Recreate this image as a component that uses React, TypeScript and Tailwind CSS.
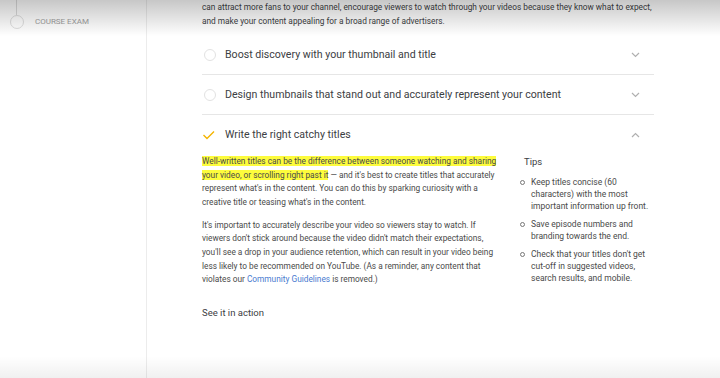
import React from "react";

function Chevron({ up }: { up?: boolean }) {
    return (
        <svg width="9" height="6" viewBox="0 0 9 6" className="text-[#b0b0b0]">
            <path
                d={up ? "M1 5 L4.5 1.5 L8 5" : "M1 1 L4.5 4.5 L8 1"}
                fill="none"
                stroke="currentColor"
                strokeWidth="1.2"
            />
        </svg>
    );
}

function Row({ title, done, open }: { title: string; done?: boolean; open?: boolean }) {
    return (
        <div className={`flex items-center h-[40px] ${open ? "" : "border-b border-[#e6e6e6]"}`}>
            <div className="w-[23px] flex items-center">
                {done ? (
                    <svg width="13" height="10" viewBox="0 0 13 10">
                        <path d="M1.5 5 L5 8.5 L12 1.5" fill="none" stroke="#f4b400" strokeWidth="1.4" />
                    </svg>
                ) : (
                    <div className="ml-[2px] w-[12px] h-[12px] rounded-full border border-[#e2e2e2]" />
                )}
            </div>
            <div className="flex-1 text-[10.6px] text-[#3c4043]">{title}</div>
            <div className="pr-[14px] flex items-center">
                <Chevron up={open} />
            </div>
        </div>
    );
}

const tips = [
    "Keep titles concise (60 characters) with the most important information up front.",
    "Save episode numbers and branding towards the end.",
    "Check that your titles don't get cut-off in suggested videos, search results, and mobile.",
];

export default function App() {
    return (
        <div
            className="relative w-[720px] h-[378px] overflow-hidden bg-white flex"
            style={{ fontFamily: "Roboto, 'Liberation Sans', sans-serif" }}
        >
            <div className="w-[147px] h-full border-r border-[#ececec] shrink-0">
                <div className="ml-[16px] w-px h-[15px] bg-[#dcdcdc]" />
                <div className="flex items-center h-[14px]">
                    <div className="ml-[10px] w-[14px] h-[14px] rounded-full border border-[#dedede]" />
                    <div className="ml-[11px] text-[8px] text-[#9e9e9e] uppercase">Course Exam</div>
                </div>
            </div>

            <div className="flex-1 pl-[55px] pr-[66px]">
                <p className="text-[8.3px] leading-[14px] text-[#3c4043] whitespace-nowrap">
                    can attract more fans to your channel, encourage viewers to watch through your videos because they know what to expect,
                    <br />
                    and make your content appealing for a broad range of advertisers.
                </p>
                <div className="mt-[7px]" />
                <Row title="Boost discovery with your thumbnail and title" />
                <Row title="Design thumbnails that stand out and accurately represent your content" />
                <Row title="Write the right catchy titles" done open />

                <div className="flex">
                    <div className="w-[298px] shrink-0 text-[8.3px] leading-[13.6px] text-[#4a4a4a]">
                        <p>
                            <span className="bg-[#fdfc3c]">
                                Well-written titles can be the difference between someone watching and sharing your video, or scrolling right past it
                            </span>{" "}
                            — and it's best to create titles that accurately represent what's in the content. You can do this by sparking curiosity with a creative title or teasing what's in the content.
                        </p>
                        <p className="mt-[9.5px]">
                            It's important to accurately describe your video so viewers stay to watch. If viewers don't stick around because the video didn't match their expectations, you'll see a drop in your audience retention, which can result in your video being less likely to be recommended on YouTube. (As a reminder, any content that violates our{" "}
                            <span className="text-[#4a7bd0]">Community Guidelines</span> is removed.)
                        </p>
                        <div className="mt-[19px] text-[9.5px] leading-[14px] text-[#3c4043]">See it in action</div>
                    </div>
                    <div className="ml-[20px] w-[130px]">
                        <div className="text-[9.5px] text-[#3c4043] pl-[4px] leading-[14px]">Tips</div>
                        <ul className="mt-[7px] text-[8.5px] leading-[12px] text-[#4a4a4a]">
                            {tips.map((t) => (
                                <li key={t} className="flex mb-[6px]">
                                    <span className="mt-[3.5px] mr-[6px] w-[5px] h-[5px] shrink-0 rounded-full border border-[#777]" />
                                    <span>{t}</span>
                                </li>
                            ))}
                        </ul>
                    </div>
                </div>
            </div>

            <div className="pointer-events-none absolute top-0 left-0 right-0 h-[36px] bg-gradient-to-b from-[rgba(0,0,0,0.22)] to-transparent" />
            <div className="pointer-events-none absolute bottom-0 left-0 right-0 h-[22px] bg-gradient-to-t from-[rgba(0,0,0,0.06)] to-transparent" />
        </div>
    );
}
